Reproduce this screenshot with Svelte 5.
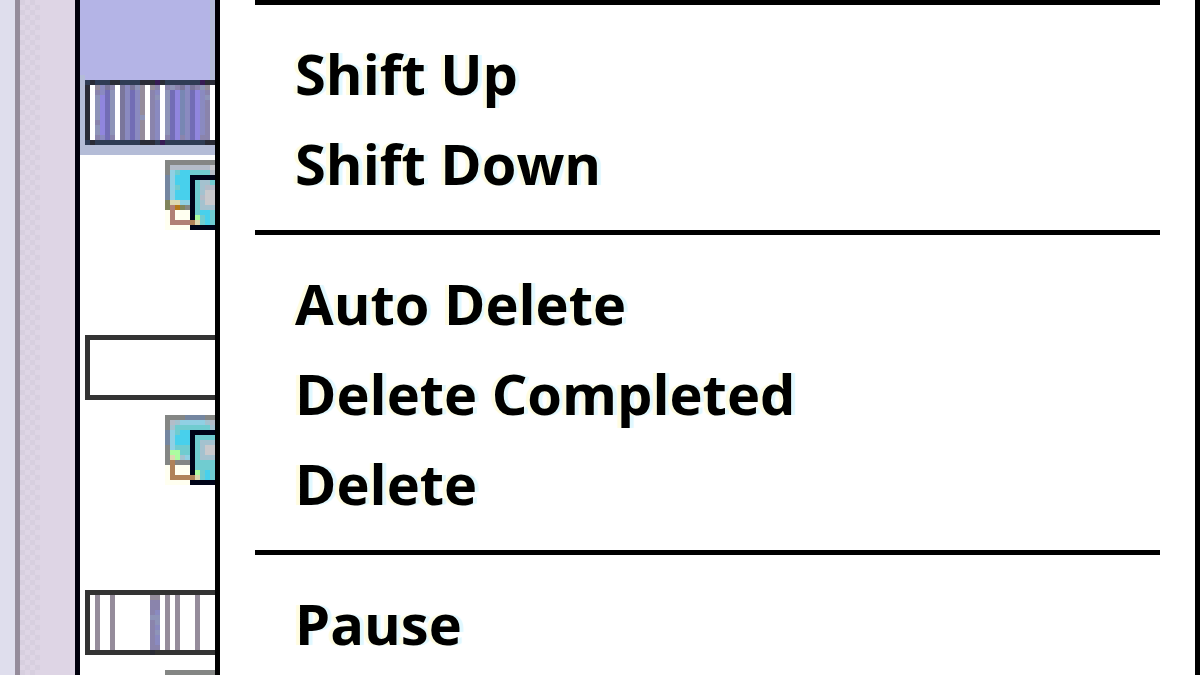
<script>
  const palette = {
    // progress bars
    b: "#333333",
    k: "#2f3c55",
    d: "#2a2b36",
    p: "#371a55",
    w: "#ffffff",
    a: "#8e94b8",
    v: "#9086de",
    i: "#726db5",
    g: "#7a769b",
    l: "#8a8ac0",
    m: "#958c9b",
    u: "#8a84ac",
    t: "#7887b3",
    // icons
    G: "#848684",
    H: "#7486a0",
    s: "#a4c2cf",
    S: "#b4bcc8",
    L: "#c9c9cc",
    A: "#90d0e4",
    T: "#70ccd0",
    C: "#48d0ec",
    N: "#000418",
    O: "#80845c",
    E: "#dcd8b0",
    F: "#acfca0",
    B: "#b47818",
    R: "#b08258",
    M: "#b08074",
    Y: "#fffff0",
  };

  const activeBar = [
    "kdkkkddkkkkdddpdkkkkkkkpdd",
    "dwmlguwglgamwmuwuauglguamw",
    "dwuliawglilmwulwaivtlivluw",
    "dwaviawglilmwuawaivtlivlaw",
    "dwaviawglilmwulwaivtlivluw",
    "dwaviawglilmwulwaivtlivluw",
    "dwaviawglilmwulwaivtlivluw",
    "dwaviawglilawulwaivtlivluw",
    "dwuviawglilmwulwaivtlivluw",
    "dwaviawglilmwulwaivtlivluw",
    "dwaviawglilmwulwaivtlivluw",
    "dwuliuwglilmwulwuivulivuuw",
    "kdkkkkkkkkkdddkpkkkkkkkkdd",
  ];

  const edge = "b".repeat(26);
  const emptyBar = [edge, ...Array(11).fill("b" + "w".repeat(25)), edge];

  const startedBar = [
    edge,
    ...["mm", "uu", "uu", "ul", "aa", "ua", "ul", "ua", "ul", "ul", "uu"].map(
      (block) => "bwmwwmwwwwwww" + block + "wmwmwwwmwww"
    ),
    edge.slice(0, 13) + "d" + edge.slice(14),
  ];

  const iconBlue = [
    "GGGGGGGGGG",
    "GSSSSSSSSL",
    "GATCCTTTTS",
    "HACCCNNNNN",
    "HACCCNTssT",
    "HATCCNTsSS",
    "HACCCNTsLL",
    "HACCCNTSLL",
    "OEEAANTsLL",
    "OMBOGNTsss",
    "YMYYYNTCCT",
    "YMYYYNFTCT",
    "YMMMMRETCT",
    "YYYYYNNNNN",
  ];

  const iconGreen = [
    "GGGGHHHHGG",
    "GSsAAAAAsS",
    "GsTTTTTTTs",
    "HATCCNNNNN",
    "HACCCNTTTT",
    "HACCCNTsss",
    "GATTTNTsLL",
    "GFFTTNTsLL",
    "GEFsANTsss",
    "GRGGGNTTTT",
    "YRYYYNTTTT",
    "YRYYYNFTCT",
    "YRRRRRETCT",
    "YYYYYNNNNN",
  ];

  const tasks = [
    { bar: activeBar, icon: iconBlue, selected: true },
    { bar: emptyBar, icon: iconGreen, selected: false },
    { bar: startedBar, icon: iconBlue, selected: false },
  ];

  const groups = [
    ["Shift Up", "Shift Down"],
    ["Auto Delete", "Delete Completed", "Delete"],
    ["Pause"],
  ];
</script>

{#snippet pixels(rows)}
  <svg
    width={rows[0].length * 5}
    height={rows.length * 5}
    viewBox="0 0 {rows[0].length} {rows.length}"
    shape-rendering="crispEdges"
    aria-hidden="true"
  >
    {#each rows as row, y}
      {#each row as cell, x}
        <rect {x} {y} width="1" height="1" fill={palette[cell]} />
      {/each}
    {/each}
  </svg>
{/snippet}

<main class="window">
  <div class="frame">
    <div class="outer"></div>
    <div class="dither"></div>
  </div>

  <div class="tasks">
    {#each tasks as task}
      <div class="task">
        <div class="progress" class:selected={task.selected}>
          {@render pixels(task.bar)}
        </div>
        <div class="icon">{@render pixels(task.icon)}</div>
      </div>
    {/each}
  </div>

  <div class="menu" role="menu">
    {#each groups as group}
      <hr />
      {#each group as label}
        <button type="button" role="menuitem">{label}</button>
      {/each}
    {/each}
  </div>
</main>

<style>
  :global(body) {
    margin: 0;
    background: #fff;
  }

  .window {
    display: flex;
    height: 100vh;
    overflow: hidden;
    background: #fff;
  }

  .frame {
    display: flex;
    flex: none;
    box-sizing: border-box;
    width: 80px;
    background: #ded5e5;
    border-right: 5px solid #00000c;
  }

  .outer {
    width: 15px;
    background: #dfdeed;
    border-right: 5px solid #958c9b;
  }

  .dither {
    width: 20px;
    background: repeating-conic-gradient(#ded5e5 0 25%, #d7cfdf 0 50%) 0 0 / 10px 10px;
  }

  .tasks {
    flex: none;
    width: 135px;
  }

  .task {
    height: 255px;
  }

  .progress {
    padding: 80px 0 10px 5px;
  }

  .selected {
    background:
      linear-gradient(#b4bcd7, #b4bcd7) right top / 5px 100% no-repeat,
      linear-gradient(#b4bcd7, #b4bcd7) left bottom / 100% 10px no-repeat,
      linear-gradient(#b4bcd7, #b4bcd7) left bottom / 5px 80px no-repeat,
      #b4b4e6;
  }

  .icon {
    padding: 5px 0 0 85px;
  }

  svg {
    display: block;
  }

  .menu {
    flex: 1;
    display: flex;
    flex-direction: column;
    padding: 0 35px;
    background: #fff;
    border: solid #000;
    border-width: 0 5px;
  }

  hr {
    flex: none;
    width: 100%;
    height: 5px;
    margin: 20px 0 25px;
    border: 0;
    background: #000;
  }

  hr:first-child {
    margin-top: 0;
  }

  button {
    flex: none;
    height: 90px;
    padding: 0 40px 4px;
    border: 0;
    background: none;
    color: #000;
    font: 700 56px/86px "Open Sans", "Noto Sans", sans-serif;
    text-align: left;
    /* colour fringes of subpixel text */
    text-shadow: -4px 0 1px #fffce0, 4px 0 1px #e0f8ff;
    white-space: nowrap;
  }
</style>
